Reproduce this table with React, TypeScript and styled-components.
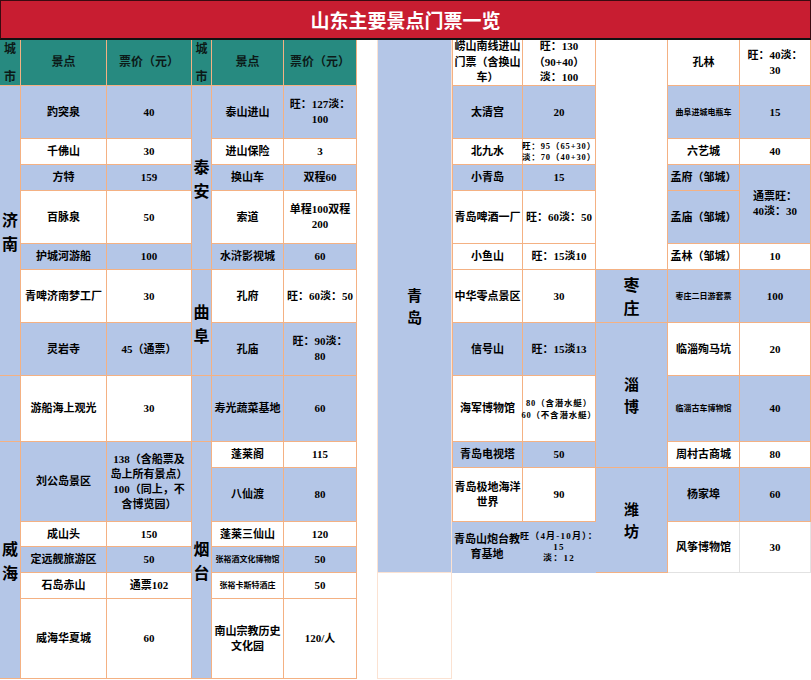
import React from "react";
import styled, { createGlobalStyle } from "styled-components";

const GlobalStyle = createGlobalStyle`
  html, body { margin: 0; padding: 0; background: #ffffff; }
  body { font-family: "Liberation Serif", "Noto Sans CJK SC", serif; }
  * { box-sizing: border-box; }
`;

const BLUE = "#b4c6e7";
const WHITE = "#ffffff";
const TEAL = "#278a80";
const ORANGE = "#f4b183";
const FAINT = "#fbe2d2";
const GRAY = "#e2e2e2";

type Bg = "b" | "w" | "t";
type Line = "o" | "f" | "g" | "n";

const bgOf = (b: Bg) => (b === "b" ? BLUE : b === "t" ? TEAL : WHITE);
const lineOf = (l: Line) =>
  l === "o" ? ORANGE : l === "f" ? FAINT : l === "g" ? GRAY : "transparent";

const Page = styled.div`
  width: 811px;
  height: 680px;
  overflow: hidden;
  display: flex;
  flex-direction: column;
`;

const TitleBar = styled.div`
  height: 40px;
  background: #c81d31;
  border: 1px solid #3a0a10;
  border-bottom: 2px solid #111;
  display: flex;
  align-items: center;
  justify-content: center;
  color: #ffffff;
  font-family: "Noto Sans CJK SC", sans-serif;
  font-weight: 700;
  font-size: 19px;
`;

const Sheet = styled.div`
  display: grid;
  grid-template-columns: 21px 86px 85px 20px 72px 73px 21px 74px 71px 73px 72px 72px 71px;
  grid-template-rows: 46px 53px 26px 26px 53px 26px 53px 53px 66px 26px 54px 25px 26px 26px 80px;
`;

interface CellProps {
  $c: number;
  $r: number;
  $rs?: number;
  $cs?: number;
  $bg: Bg;
  $line?: Line;
  $lb?: boolean;
  $fs?: number;
  $lh?: number;
  $ls?: number;
}

const Cell = styled.div<CellProps>`
  grid-column: ${(p) => p.$c} / span ${(p) => p.$cs ?? 1};
  grid-row: ${(p) => p.$r} / span ${(p) => p.$rs ?? 1};
  background: ${(p) => bgOf(p.$bg)};
  border-right: 1px solid ${(p) => lineOf(p.$line ?? "o")};
  border-bottom: 1px solid ${(p) => lineOf(p.$line ?? "o")};
  border-left: ${(p) => (p.$lb ? `1px solid ${ORANGE}` : "none")};
  display: flex;
  align-items: center;
  justify-content: center;
  text-align: center;
  white-space: pre;
  color: #000;
  font-weight: 700;
  font-size: ${(p) => p.$fs ?? 11}px;
  line-height: ${(p) => p.$lh ?? 15}px;
  letter-spacing: ${(p) => p.$ls ?? 0}px;
  overflow: visible;
`;

const HeadCell = styled(Cell)`
  font-size: 12px;
  color: #0c1a18;
`;

const StackHead = styled(HeadCell)`
  flex-direction: column;
  justify-content: space-between;
  padding: 2px 0 0;
`;

const CityCell = styled(Cell)`
  flex-direction: column;
  font-family: "Noto Sans CJK SC", sans-serif;
`;

const CityChar = styled.span`
  display: block;
`;

const GapColumn = styled.div`
  grid-column: 7;
  grid-row: 1 / span 15;
  background: #fff;
  border-right: 1px solid ${FAINT};
`;

type Item = {
  c: number;
  r: number;
  rs?: number;
  t: string;
  bg: Bg;
  fs?: number;
  lh?: number;
  ls?: number;
  line?: Line;
  lb?: boolean;
};

type PairOpts = {
  rs?: number;
  nfs?: number;
  pfs?: number;
  plh?: number;
  nlh?: number;
  pls?: number;
  line?: Line;
  lb?: boolean;
};

const pair = (c: number, r: number, name: string, price: string, bg: Bg, o: PairOpts = {}): Item[] => [
  { c, r, rs: o.rs, t: name, bg, fs: o.nfs, lh: o.nlh, line: o.line, lb: o.lb },
  { c: c + 1, r, rs: o.rs, t: price, bg, fs: o.pfs, lh: o.plh, ls: o.pls, line: o.line },
];

const items: Item[] = [
  // left block 1
  ...pair(2, 2, "趵突泉", "40", "b"),
  ...pair(2, 3, "千佛山", "30", "w"),
  ...pair(2, 4, "方特", "159", "b"),
  ...pair(2, 5, "百脉泉", "50", "w"),
  ...pair(2, 6, "护城河游船", "100", "b"),
  ...pair(2, 7, "青啤济南梦工厂", "30", "w"),
  ...pair(2, 8, "灵岩寺", "45（通票）", "b"),
  ...pair(2, 9, "游船海上观光", "30", "w"),
  ...pair(2, 10, "刘公岛景区", "138（含船票及\n岛上所有景点）\n100（同上，不\n含博览园）", "b", { rs: 2 }),
  ...pair(2, 12, "成山头", "150", "w"),
  ...pair(2, 13, "定远舰旅游区", "50", "b"),
  ...pair(2, 14, "石岛赤山", "通票102", "w"),
  ...pair(2, 15, "威海华夏城", "60", "w"),
  // left block 2
  ...pair(5, 2, "泰山进山", "旺：127淡：\n100", "b"),
  ...pair(5, 3, "进山保险", "3", "w"),
  ...pair(5, 4, "换山车", "双程60", "b"),
  ...pair(5, 5, "索道", "单程100双程\n200", "w"),
  ...pair(5, 6, "水浒影视城", "60", "b"),
  ...pair(5, 7, "孔府", "旺：60淡：50", "w"),
  ...pair(5, 8, "孔庙", "旺：90淡：\n80", "b"),
  ...pair(5, 9, "寿光蔬菜基地", "60", "b"),
  ...pair(5, 10, "蓬莱阁", "115", "w"),
  ...pair(5, 11, "八仙渡", "80", "b"),
  ...pair(5, 12, "蓬莱三仙山", "120", "w"),
  ...pair(5, 13, "张裕酒文化博物馆", "50", "b", { nfs: 8 }),
  ...pair(5, 14, "张裕卡斯特酒庄", "50", "w", { nfs: 8 }),
  ...pair(5, 15, "南山宗教历史\n文化园", "120/人", "w"),
  // right block 1 (青岛)
  ...pair(9, 1, "崂山南线进山\n门票（含换山\n车）", "旺：130\n（90+40）\n淡：100", "w", { lb: true, nlh: 15.5, plh: 15.5 }),
  ...pair(9, 2, "太清宫", "20", "b", { lb: true }),
  ...pair(9, 3, "北九水", "旺：95（65+30）\n淡：70（40+30）", "w", { lb: true, pfs: 8.5, plh: 11, pls: 0.9 }),
  ...pair(9, 4, "小青岛", "15", "b", { lb: true }),
  ...pair(9, 5, "青岛啤酒一厂", "旺：60淡：50", "w", { lb: true }),
  ...pair(9, 6, "小鱼山", "旺：15淡10", "w", { lb: true }),
  ...pair(9, 7, "中华零点景区", "30", "w", { lb: true }),
  ...pair(9, 8, "信号山", "旺：15淡13", "b", { lb: true }),
  ...pair(9, 9, "海军博物馆", "80（含潜水艇）\n60（不含潜水艇）", "w", { lb: true, pfs: 8.5, plh: 12, pls: 0.8 }),
  ...pair(9, 10, "青岛电视塔", "50", "b", { lb: true }),
  ...pair(9, 11, "青岛极地海洋\n世界", "90", "w", { lb: true }),
  ...pair(9, 12, "青岛山炮台教\n育基地", "旺（4月-10月）：\n15\n淡：12", "b", { rs: 2, pfs: 9, plh: 11, pls: 1.2, line: "n" }),
  // right block 2
  ...pair(12, 1, "孔林", "旺：40淡：\n30", "w"),
  ...pair(12, 2, "曲阜进城电瓶车", "15", "b", { nfs: 8 }),
  ...pair(12, 3, "六艺城", "40", "w"),
  { c: 12, r: 4, t: "孟府（邹城）", bg: "b" },
  { c: 13, r: 4, rs: 2, t: "通票旺：\n40淡：30", bg: "b" },
  { c: 12, r: 5, t: "孟庙（邹城）", bg: "b" },
  ...pair(12, 6, "孟林（邹城）", "10", "w"),
  ...pair(12, 7, "枣庄二日游套票", "100", "b", { nfs: 8 }),
  ...pair(12, 8, "临淄殉马坑", "20", "w"),
  ...pair(12, 9, "临淄古车博物馆", "40", "b", { nfs: 8 }),
  ...pair(12, 10, "周村古商城", "80", "w"),
  ...pair(12, 11, "杨家埠", "60", "b"),
  ...pair(12, 12, "风筝博物馆", "30", "w", { rs: 2, line: "g" }),
  // empty cells
  { c: 1, r: 9, t: "", bg: "b" },
  { c: 4, r: 9, t: "", bg: "b" },
  { c: 11, r: 1, rs: 6, t: "", bg: "w" },
  { c: 8, r: 14, rs: 2, t: "", bg: "w", line: "f" },
];

type City = { c: number; r: number; rs: number; name: string; fs: number; lh: number; line?: Line };

const cities: City[] = [
  { c: 1, r: 2, rs: 7, name: "济南", fs: 16, lh: 24 },
  { c: 1, r: 10, rs: 6, name: "威海", fs: 16, lh: 24 },
  { c: 4, r: 2, rs: 5, name: "泰安", fs: 16, lh: 24 },
  { c: 4, r: 7, rs: 2, name: "曲阜", fs: 16, lh: 24 },
  { c: 4, r: 10, rs: 6, name: "烟台", fs: 16, lh: 24 },
  { c: 8, r: 1, rs: 13, name: "青岛", fs: 15, lh: 22, line: "f" },
  { c: 11, r: 7, rs: 1, name: "枣庄", fs: 16, lh: 23 },
  { c: 11, r: 8, rs: 3, name: "淄博", fs: 15, lh: 22 },
  { c: 11, r: 11, rs: 3, name: "潍坊", fs: 15, lh: 22 },
];

const headers: { c: number; t: string }[] = [
  { c: 2, t: "景点" },
  { c: 3, t: "票价（元）" },
  { c: 5, t: "景点" },
  { c: 6, t: "票价（元）" },
];

export default function App() {
  return (
    <>
      <GlobalStyle />
      <Page>
        <TitleBar>山东主要景点门票一览</TitleBar>
        <Sheet>
          {[1, 4].map((c) => (
            <StackHead key={`sh${c}`} $c={c} $r={1} $bg="t">
              <span>城</span>
              <span>市</span>
            </StackHead>
          ))}
          {headers.map((h) => (
            <HeadCell key={`h${h.c}`} $c={h.c} $r={1} $bg="t">
              {h.t}
            </HeadCell>
          ))}
          <GapColumn />
          {cities.map((ct) => (
            <CityCell
              key={ct.name}
              $c={ct.c}
              $r={ct.r}
              $rs={ct.rs}
              $bg="b"
              $fs={ct.fs}
              $lh={ct.lh}
              $line={ct.line}
            >
              {Array.from(ct.name).map((ch, i) => (
                <CityChar key={i}>{ch}</CityChar>
              ))}
            </CityCell>
          ))}
          {items.map((it, i) => (
            <Cell
              key={i}
              $c={it.c}
              $r={it.r}
              $rs={it.rs}
              $bg={it.bg}
              $fs={it.fs}
              $lh={it.lh}
              $ls={it.ls}
              $line={it.line}
              $lb={it.lb}
            >
              {it.t}
            </Cell>
          ))}
        </Sheet>
      </Page>
    </>
  );
}
